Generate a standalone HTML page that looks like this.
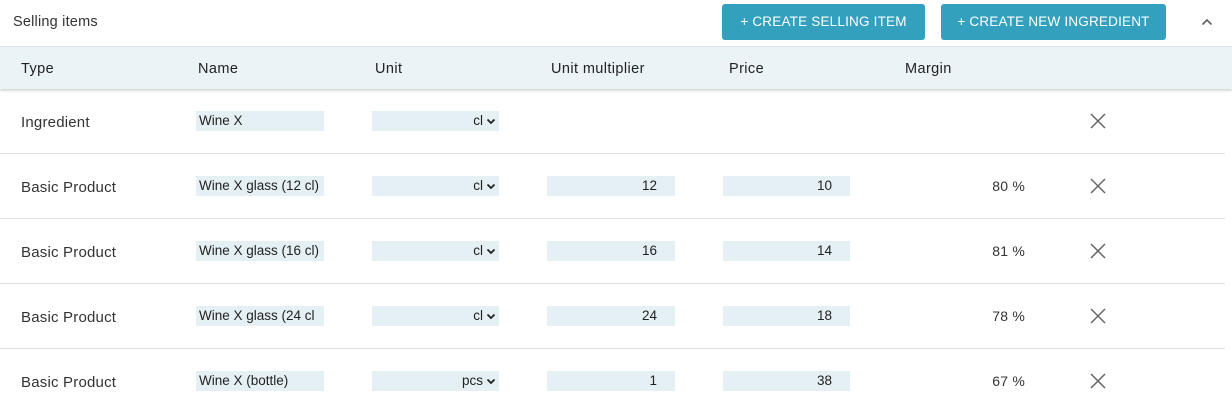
<!DOCTYPE html>
<html><head><style>
*{margin:0;padding:0;box-sizing:border-box}
body{width:1232px;height:408px;background:#fff;font-family:"Liberation Sans",sans-serif;color:#333;position:relative;overflow:hidden;font-size:15px;letter-spacing:0.2px}
.a{position:absolute}
.btn{position:absolute;top:4px;height:36px;background:#33a1bd;border-radius:3px;color:#fff;font-size:13.5px;line-height:36px;text-align:center;letter-spacing:0.2px}
.thead{position:absolute;left:0;top:46px;width:1232px;height:43px;background:#eaf3f6;border-top:1px solid #dde3e6;box-shadow:0 2px 2px rgba(0,0,0,0.15)}
.th{position:absolute;top:14px;font-size:14.5px;color:#222;letter-spacing:0.4px}
.row{position:absolute;left:0;width:1225px;height:65px;border-bottom:1px solid #e0e0e0}
.t{position:absolute;left:21px;top:25px}
.inp{position:absolute;top:22px;height:20px;background:#e5f0f5;font-size:13.5px;line-height:20px;padding:0 3px;color:#222;white-space:nowrap;overflow:hidden;letter-spacing:0}
.r{text-align:right;padding-right:8px}
.sel{text-align:right;padding-right:16px}
.sel svg{position:absolute;right:3px;top:7px}
.x{position:absolute;left:1090px;top:24px}
.m{position:absolute;left:925px;width:100px;text-align:right;top:24px;font-size:14px}
</style></head><body>
<div class="a" style="left:13px;top:14px;font-size:14.5px;color:#333">Selling items</div>
<div class="btn" style="left:722px;width:203px">+ CREATE SELLING ITEM</div>
<div class="btn" style="left:941px;width:225px">+ CREATE NEW INGREDIENT</div>
<svg class="a" style="left:1201px;top:18px" width="12" height="8" viewBox="0 0 12 8"><path d="M1.5 6.5L6 2l4.5 4.5" stroke="#666" stroke-width="1.8" fill="none"/></svg>
<div class="thead">
<div class="th" style="left:21px">Type</div>
<div class="th" style="left:198px">Name</div>
<div class="th" style="left:375px">Unit</div>
<div class="th" style="left:551px">Unit multiplier</div>
<div class="th" style="left:729px">Price</div>
<div class="th" style="left:905px">Margin</div>
</div>

<div class="row" style="top:89px">
<div class="t">Ingredient</div>
<div class="inp" style="left:196px;width:128px">Wine X</div>
<div class="inp sel" style="left:372px;width:127px">cl<svg width="10" height="7" viewBox="0 0 10 7"><path d="M1.5 1.5L5 5l3.5-3.5" stroke="#222" stroke-width="1.8" fill="none"/></svg></div>
<svg class="x" width="16" height="16"><path d="M1 1L15 15M15 1L1 15" stroke="#666" stroke-width="1.5"/></svg>
</div>

<div class="row" style="top:154px">
<div class="t">Basic Product</div>
<div class="inp" style="left:196px;width:128px">Wine X glass (12 cl)</div>
<div class="inp sel" style="left:372px;width:127px">cl<svg width="10" height="7" viewBox="0 0 10 7"><path d="M1.5 1.5L5 5l3.5-3.5" stroke="#222" stroke-width="1.8" fill="none"/></svg></div>
<div class="inp r" style="left:547px;width:128px;padding-right:18px">12</div>
<div class="inp r" style="left:723px;width:127px;padding-right:18px">10</div>
<div class="m">80 %</div>
<svg class="x" width="16" height="16"><path d="M1 1L15 15M15 1L1 15" stroke="#666" stroke-width="1.5"/></svg>
</div>

<div class="row" style="top:219px">
<div class="t">Basic Product</div>
<div class="inp" style="left:196px;width:128px">Wine X glass (16 cl)</div>
<div class="inp sel" style="left:372px;width:127px">cl<svg width="10" height="7" viewBox="0 0 10 7"><path d="M1.5 1.5L5 5l3.5-3.5" stroke="#222" stroke-width="1.8" fill="none"/></svg></div>
<div class="inp r" style="left:547px;width:128px;padding-right:18px">16</div>
<div class="inp r" style="left:723px;width:127px;padding-right:18px">14</div>
<div class="m">81 %</div>
<svg class="x" width="16" height="16"><path d="M1 1L15 15M15 1L1 15" stroke="#666" stroke-width="1.5"/></svg>
</div>

<div class="row" style="top:284px">
<div class="t">Basic Product</div>
<div class="inp" style="left:196px;width:128px">Wine X glass (24 cl</div>
<div class="inp sel" style="left:372px;width:127px">cl<svg width="10" height="7" viewBox="0 0 10 7"><path d="M1.5 1.5L5 5l3.5-3.5" stroke="#222" stroke-width="1.8" fill="none"/></svg></div>
<div class="inp r" style="left:547px;width:128px;padding-right:18px">24</div>
<div class="inp r" style="left:723px;width:127px;padding-right:18px">18</div>
<div class="m">78 %</div>
<svg class="x" width="16" height="16"><path d="M1 1L15 15M15 1L1 15" stroke="#666" stroke-width="1.5"/></svg>
</div>

<div class="row" style="top:349px;border-bottom:none">
<div class="t">Basic Product</div>
<div class="inp" style="left:196px;width:128px">Wine X (bottle)</div>
<div class="inp sel" style="left:372px;width:127px">pcs<svg width="10" height="7" viewBox="0 0 10 7"><path d="M1.5 1.5L5 5l3.5-3.5" stroke="#222" stroke-width="1.8" fill="none"/></svg></div>
<div class="inp r" style="left:547px;width:128px;padding-right:18px">1</div>
<div class="inp r" style="left:723px;width:127px;padding-right:18px">38</div>
<div class="m">67 %</div>
<svg class="x" width="16" height="16"><path d="M1 1L15 15M15 1L1 15" stroke="#666" stroke-width="1.5"/></svg>
</div>
</body></html>
